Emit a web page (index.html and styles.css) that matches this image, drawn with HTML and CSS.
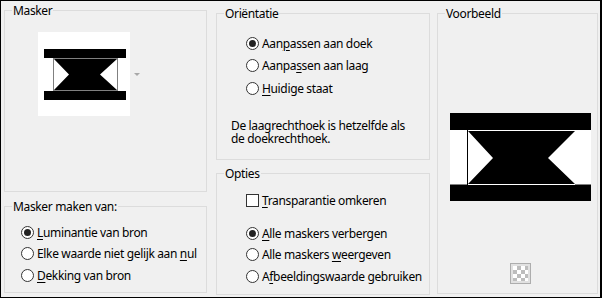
FILE: index.html
```html
<!DOCTYPE html>
<html lang="nl">
<head>
    <meta charset="UTF-8">
    <title>Masker</title>
    <link rel="stylesheet" href="styles.css">
</head>
<body>
    <div class="dialog">
        <div class="column col-left">
            <div class="group group-mask">
                <div class="group-title">Masker</div>
                <div class="mask-picker">
                    <div class="mask-thumb">
                        <svg width="82" height="51" viewBox="0 0 82 51">
                            <rect x="0" y="0" width="82" height="9" fill="#000"/>
                            <rect x="0" y="42" width="82" height="9" fill="#000"/>
                            <polygon points="10,10 73,10 56,25.5 73,41 10,41 25,25.5" fill="#000"/>
                            <rect x="9.5" y="9.5" width="64" height="32" fill="none" stroke="#808080"/>
                        </svg>
                    </div>
                    <span class="drop-arrow"></span>
                </div>
            </div>
            <div class="group group-source">
                <div class="group-title">Masker maken van:</div>
                <div class="options">
                    <div class="radio"><span class="dot checked"></span><span><u>L</u>uminantie van bron</span></div>
                    <div class="radio"><span class="dot"></span><span>Elke waarde niet gelijk aan <u>n</u>ul</span></div>
                    <div class="radio"><span class="dot"></span><span><u>D</u>ekking van bron</span></div>
                </div>
            </div>
        </div>

        <div class="column col-mid">
            <div class="group group-orient">
                <div class="group-title">Oriëntatie</div>
                <div class="options">
                    <div class="radio"><span class="dot checked"></span><span>Aan<u>p</u>assen aan doek</span></div>
                    <div class="radio"><span class="dot"></span><span>Aanpa<u>s</u>sen aan laag</span></div>
                    <div class="radio"><span class="dot"></span><span><u>H</u>uidige staat</span></div>
                </div>
                <div class="note">
                    <div class="note-line">De laagrechthoek is hetzelfde als</div>
                    <div class="note-line">de doekrechthoek.</div>
                </div>
            </div>
            <div class="group group-opts">
                <div class="group-title">Opties</div>
                <div class="check"><span class="box"></span><span><u>T</u>ransparantie omkeren</span></div>
                <div class="options">
                    <div class="radio"><span class="dot checked"></span><span><u>A</u>lle maskers verbergen</span></div>
                    <div class="radio"><span class="dot"></span><span>Alle maskers <u>w</u>eergeven</span></div>
                    <div class="radio"><span class="dot"></span><span>A<u>f</u>beeldingswaarde gebruiken</span></div>
                </div>
            </div>
        </div>

        <div class="column col-right">
            <div class="group group-preview">
                <div class="group-title">Voorbeeld</div>
                <div class="preview">
                    <svg width="141" height="88" viewBox="0 0 141 88">
                        <rect x="0" y="0" width="141" height="88" fill="#000"/>
                        <rect x="0" y="17" width="141" height="55" fill="#fff"/>
                        <rect x="0" y="71" width="17" height="1" fill="#808080"/>
                        <rect x="125" y="71" width="16" height="1" fill="#808080"/>
                        <rect x="17" y="17" width="108" height="55" fill="#fff"/>
                        <polygon points="18,18 125,18 98,45 125,71 18,71 43,45" fill="#000"/>
                        <rect x="17" y="17" width="1" height="55" fill="#000"/>
                    </svg>
                </div>
                <div class="checker-btn"><span class="checker"></span></div>
            </div>
        </div>
    </div>
</body>
</html>
```

FILE: styles.css
```css
body {
    margin: 0;
    background: #f0f0f0;
    font-family: "Noto Sans", "Open Sans", sans-serif;
    font-size: 12px;
    letter-spacing: -0.35px;
    color: #000;
}
.dialog {
    box-sizing: border-box;
    width: 602px;
    height: 298px;
    display: flex;
    padding: 0 2px 0 3px;
    border: 1px solid #000;
    border-right-width: 2px;
    background: #f0f0f0;
}
.column {
    display: flex;
    flex-direction: column;
}
.col-left {
    width: 203px;
    padding-top: 9px;
    gap: 14px;
}
.col-mid {
    width: 214px;
    margin-left: 9px;
    padding-top: 12px;
    gap: 13px;
}
.col-right {
    width: 161px;
    margin-left: 7px;
    padding-top: 12px;
}
.group {
    box-sizing: border-box;
    border: 1px solid #dcdcdc;
}
.group-title {
    width: fit-content;
    height: 15px;
    line-height: 15px;
    margin: -8px 0 0 7px;
    padding: 0 1px;
    background: #f0f0f0;
    white-space: nowrap;
}
.group-mask {
    height: 182px;
}
.group-source {
    height: 87px;
}
.group-orient {
    height: 147px;
}
.group-opts {
    height: 122px;
}
.group-preview {
    height: 281px;
}

/* mask picker */
.mask-picker {
    display: flex;
    align-items: center;
    margin: 14px 0 0 33px;
}
.mask-thumb {
    width: 92px;
    height: 84px;
    background: #fff;
    display: flex;
    align-items: center;
    justify-content: center;
}
.mask-thumb svg {
    display: block;
    margin-left: 2px;
}
.drop-arrow {
    width: 0;
    height: 0;
    margin-left: 4px;
    border-left: 3px solid transparent;
    border-right: 3px solid transparent;
    border-top: 3px solid #a8a8a8;
}

/* radios and checkboxes */
.options {
    display: flex;
    flex-direction: column;
}
.radio, .check {
    display: flex;
    align-items: center;
    height: 16px;
    white-space: nowrap;
}
.dot {
    box-sizing: border-box;
    width: 13px;
    height: 13px;
    margin-right: 3px;
    border: 1px solid #333;
    border-radius: 50%;
    background: #fff;
    display: flex;
    align-items: center;
    justify-content: center;
}
.dot.checked::after {
    content: "";
    width: 7px;
    height: 7px;
    border-radius: 50%;
    background: #222;
}
.box {
    box-sizing: border-box;
    width: 13px;
    height: 13px;
    margin-right: 3px;
    border: 1px solid #333;
    background: #fff;
}
u {
    text-decoration-thickness: 1px;
    text-underline-offset: 2px;
}

.group-source .options {
    padding: 10px 0 0 16px;
    gap: 5.5px;
}
.group-orient .options {
    padding: 14px 0 0 29px;
    gap: 6.5px;
}
.note {
    margin: 23px 0 0 14px;
}
.note-line {
    height: 12.5px;
    line-height: 13px;
    white-space: nowrap;
}
.group-opts .check {
    margin: 11px 0 0 29px;
}
.group-opts .options {
    padding: 17px 0 0 29px;
    gap: 5.5px;
}

/* preview */
.preview {
    margin: 92px 0 0 12px;
    width: 141px;
    height: 88px;
}
.preview svg {
    display: block;
}
.checker-btn {
    box-sizing: border-box;
    width: 21px;
    height: 21px;
    margin: 62px 0 0 72px;
    border: 1px solid #adadad;
    background: #e1e1e1;
    padding: 2px;
}
.checker {
    display: block;
    width: 15px;
    height: 15px;
    background-color: #fff;
    background-image: conic-gradient(#bdbdbd 25%, #fff 0 50%, #bdbdbd 0 75%, #fff 0);
    background-size: 8px 8px;
}
```
